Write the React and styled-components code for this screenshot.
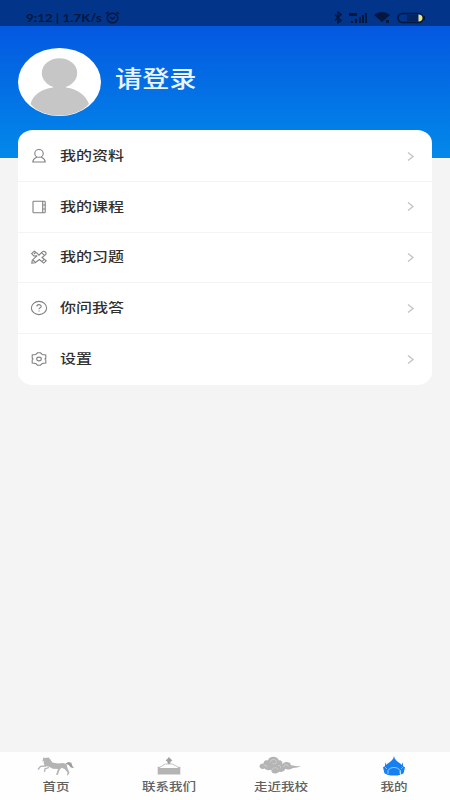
import React from "react";
import styled, { createGlobalStyle } from "styled-components";

const GlobalStyle = createGlobalStyle`
  * {
    box-sizing: border-box;
  }

  body {
    margin: 0;
    background-color: #f4f4f4;
    font-family: "Liberation Sans", "Noto Sans CJK SC", sans-serif;
  }
`;

const Page = styled.div`
  display: flex;
  flex-direction: column;
  width: 450px;
  height: 800px;
  overflow: hidden;
  background-color: #f4f4f4;
`;

const StatusBar = styled.div`
  display: flex;
  flex: none;
  justify-content: space-between;
  align-items: center;
  height: 26px;
  padding: 9px 25px 0 26px;
  background-color: #023489;
  color: #03173f;
`;

const StatusGroup = styled.div`
  display: flex;
  align-items: center;
  gap: ${(props) => props.$gap}px;
`;

const StatusText = styled.span`
  width: 76px;
  font-family: Lato, sans-serif;
  font-size: 12px;
  font-weight: 700;
  line-height: 14px;
  white-space: nowrap;
  transform: scaleX(1.11);
  transform-origin: left center;
`;

const Header = styled.header`
  display: flex;
  flex: none;
  gap: 14px;
  height: 133px;
  padding: 22px 18px 0;
  border-bottom: 1px solid #fdfeff;
  background: linear-gradient(#0458e0, #0289ea);
`;

const Avatar = styled.svg`
  display: block;
  width: 83px;
  height: 68px;
`;

const LoginText = styled.h1`
  margin: 14px 0 0;
  color: #eaf5ff;
  font-size: 23px;
  font-weight: 500;
  line-height: 34px;
  transform: scaleX(1.18);
  transform-origin: left center;
`;

const Menu = styled.main`
  flex: none;
  width: 414px;
  height: 255px;
  margin: -29px 18px 0;
  padding-top: 1.2px;
  border-radius: 15px / 13px;
  background-color: #fff;
`;

const MenuRow = styled.div`
  display: flex;
  align-items: center;
  height: 50.7px;
  padding: 0 17px 0 12px;
  border-bottom: 1px solid #f4f4f4;

  &:last-child {
    border-bottom: none;
  }
`;

const LineIcon = styled.svg`
  flex: none;
  width: 18px;
  height: 16px;
  margin-right: 12px;
  fill: none;
  stroke: #808080;
  stroke-width: 1.1;
`;

const MenuLabel = styled.span`
  flex: 1;
  color: #303030;
  font-size: 13px;
  font-weight: 500;
  line-height: 20px;
  transform: scaleX(1.23);
  transform-origin: left center;
`;

const Chevron = styled.svg`
  width: 9px;
  height: 11px;
  fill: none;
  stroke: #c4c4c4;
  stroke-width: 1.4;
`;

const TabBar = styled.nav`
  display: flex;
  flex: none;
  height: 48px;
  margin-top: auto;
  background-color: #fefefe;
`;

const Tab = styled.div`
  display: flex;
  flex: 1;
  flex-direction: column;
  align-items: center;
  padding-top: 4px;
  color: ${(props) => (props.$active ? "#1680f2" : "#b4b4b4")};
`;

const TabIcon = styled.svg`
  width: 44px;
  height: 22px;
`;

const TabLabel = styled.span`
  margin-top: 1px;
  color: #606060;
  font-size: 11px;
  font-weight: 500;
  line-height: 16px;
  transform: scaleX(1.23);
`;

const menuItems = [
  {
    label: "我的资料",
    icon: (
      <>
        <ellipse cx="9" cy="5.4" rx="4.2" ry="3.9" />
        <path d="M7 8.8C6 10 3 9.8 2.8 14H15.2C15 9.8 12 10 11 8.8" />
      </>
    ),
  },
  {
    label: "我的课程",
    icon: (
      <>
        <rect x="3" y="2.3" width="12.2" height="11.4" rx="0.8" />
        <path d="M12.7 2.3v11.4M12.7 6h2.5M12.7 10h2.5" />
      </>
    ),
  },
  {
    label: "我的习题",
    icon: (
      <>
        <path d="M7.2 6.7 3.9 7 1.7 4.6 4.3 2.2 7 4.1 9 6.2 12.3 2.9Q13.7 1.6 15.3 3T15.5 5.7L12 8.5 16.2 11.8 13.7 14.1 9.4 10.5 5.2 13.8 1.8 14.1 2.3 11.2 7.2 6.7" />
        <path d="m11.6 3.8 2.8 2.4M2.8 11l2.7 2.4M12 12.3l2.3-2M4 5l1.6-1.5" />
      </>
    ),
  },
  {
    label: "你问我答",
    icon: (
      <>
        <ellipse cx="9" cy="8" rx="7.6" ry="6.6" />
        <path d="M6.9 6.5C6.9 4 11.2 4.1 11.2 6.4 11.2 7.9 9 7.7 9 9.3M9 10.4v1.2" />
      </>
    ),
  },
  {
    label: "设置",
    icon: (
      <>
        <path d="M7.5 1.8h3L12.2 3.5 15.8 4v3.2L15 8l.8.8V12l-3.6.5-1.7 1.7h-3L5.8 12.5 2.2 12V8.8L3 8l-.8-.8V4l3.6-.5z" />
        <ellipse cx="9" cy="8" rx="2.3" ry="1.9" />
      </>
    ),
  },
];

const tabs = [
  {
    label: "首页",
    icon: (
      <>
        <path
          fill="currentColor"
          d="M8.3 5.5 9.5 1.3l1.2.8 4-.5 1.5 1.6 2.2 3.2 5.6 1.1 5-.5 3.6 1 .9 4.2 2 4.4-1.6 2.8-1-.5.7-2.4-3-3.6-3.1-1.1-2 2.1-1.6 4.8-1.9.4 2-6-5.3-.4-3.6-2-4.2-.7-1.3-3 .3-2.2-2 .9z"
        />
        <path
          fill="none"
          stroke="currentColor"
          strokeWidth="1.3"
          d="m12 10-5.5.3L4 13.5M15 11.5l-4 1.3-.5 3"
        />
        <path fill="#9c9c9c" d="M31.5 7.6 34.5 6l2.8.8 1 3 1.7 2.2-3.2-.6-2-2.5z" />
      </>
    ),
  },
  {
    label: "联系我们",
    icon: (
      <>
        <path fill="#a0a0a0" d="M22 1 23.7 3 25.4 4.3 23.6 5.7 23 8h-2l-.6-2.3-1.8-1.4L20.3 3z" />
        <path fill="none" stroke="currentColor" strokeWidth="0.8" d="M11.2 12 18.5 8h7l7.3 4" />
        <path fill="currentColor" d="m10.7 10.5 3.2 1.4h16.2l3.2-1.4V18.6H10.7z" />
      </>
    ),
  },
  {
    label: "走近我校",
    icon: (
      <>
        <path
          fill="currentColor"
          d="M.5 11c-.5-2.3 2-3.8 4.2-3.4C4.2 4 8.5 4.2 9 4.5 9.5-.2 18.8-.6 19.8 4.4c4-.5 4 3.3 3.1 4.3 2.8-4 9-3.3 9 .6 3 .4 6 1.1 10.6 1-5 1.6-7.4 1.3-10 2.4-3.3 1.5-5.3.7-6.2.1-.8 3-3.9 3.4-6 3-4.2 3.6-8.7 1.3-7.9-2C8.8 15 6 13.6 5.7 12.6 4 13.6 1.6 12.9.5 11z"
        />
        <path
          fill="none"
          stroke="#d4d4d4"
          strokeWidth="0.8"
          d="M11 6.4c1-4.4 7.3-3.2 6.5 0-.5 2.3-4.3 1.9-3.8.2M4.7 9.6c2-1.4 4.4.6 2.4 1.7M13 14c.2-3 6.7-3 5.5-.3M19 9.4c2.6 0 3.4 1.9 2.2 2.9M24.5 11c.5-3.1 5-2.9 4.6-.3"
        />
      </>
    ),
  },
  {
    label: "我的",
    active: true,
    icon: (
      <>
        <path
          fill="currentColor"
          d="M22 0c.5 3.2 2.4 5.2 6.2 7.6 2.4 1.7 3.3 3.7 2.4 6.4H13.4c-.9-2.700 0-4.700 2.400-6.400C19.600 5.200 21.500 3.200 22 0z"
        />
        <path
          fill="currentColor"
          d="M13.300 6.200 15 10.500l1 8.500-3.600-1.800L11 11.200l1.900-1zM30.700 6.200 29 10.500l-1 8.500 3.600-1.800L33 11.200l-1.900-1zM15 13h14v5.500l-3.500 1h-7l-3.500-1z"
        />
        <path
          fill="none"
          stroke="#a8d4ff"
          strokeWidth="0.9"
          d="M16 17.800v-3.300c2.200-4 9.800-4 12 0v3.300M13.200 11.300l1.600 1.500M30.800 11.300l-1.600 1.500"
        />
      </>
    ),
  },
];

const App = () => {
  return (
    <>
      <GlobalStyle />
      <Page>
        <StatusBar>
          <StatusGroup $gap={3}>
            <StatusText>9:12 | 1.7K/s</StatusText>
            <svg width="15" height="13" fill="none" stroke="currentColor" strokeWidth="1.5">
              <ellipse cx="7.5" cy="7" rx="5.3" ry="4.8" />
              <path d="M.8 3 3.5 1M14.2 3 11.5 1M5 6l2.5 2L10 6" />
            </svg>
          </StatusGroup>
          <StatusGroup $gap={6}>
            <svg width="9" height="13" fill="none" stroke="currentColor" strokeWidth="1.4">
              <path d="m1 3.5 6 6-3 2.5V1l3 2.5-6 6" />
            </svg>
            <svg width="18" height="12" fill="currentColor">
              <path d="M0 1h8v3H0zM2 9h2v2H2zM6 7h2v4H6zM10 5h2v6h-2zM13 3h2v8h-2zM16 1h2v10h-2z" />
            </svg>
            <svg width="18" height="13" fill="currentColor">
              <path d="M1 4Q9-2 17 4L9 11zM13 9h3v3h-3z" />
            </svg>
            <svg width="28" height="12" fill="none">
              <rect x="1" y="1.5" width="25" height="9" rx="4.5" stroke="currentColor" strokeWidth="1.5" />
              <path fill="currentColor" d="M10 3h11v6H10z" opacity="0.55" />
              <path fill="#eee37a" d="M21.5 2.5c2.6 0 4 1.4 4 3.5s-1.4 3.5-4 3.5z" />
              <path stroke="currentColor" strokeWidth="2" d="M27 4v4" />
            </svg>
          </StatusGroup>
        </StatusBar>
        <Header>
          <Avatar viewBox="0 0 83 68">
            <defs>
              <clipPath id="avatar-clip">
                <ellipse cx="41.5" cy="34" rx="41" ry="33.5" />
              </clipPath>
            </defs>
            <ellipse cx="41.5" cy="34" rx="41.5" ry="34" fill="#fff" />
            <g clipPath="url(#avatar-clip)" fill="#c6c6c6">
              <ellipse cx="41.5" cy="25" rx="17.7" ry="14.7" />
              <path d="M35 37h13v2.5c12 1.5 20 8 23 16.5-7 8-18 12-29.5 12S19 64 12.5 56C15 47 23 41 35 39.5z" />
            </g>
          </Avatar>
          <LoginText>请登录</LoginText>
        </Header>
        <Menu>
          {menuItems.map((item) => (
            <MenuRow key={item.label}>
              <LineIcon viewBox="0 0 18 16">{item.icon}</LineIcon>
              <MenuLabel>{item.label}</MenuLabel>
              <Chevron viewBox="0 0 9 11">
                <path d="m2 1.5 5 4-5 4" />
              </Chevron>
            </MenuRow>
          ))}
        </Menu>
        <TabBar>
          {tabs.map((tab) => (
            <Tab key={tab.label} $active={tab.active}>
              <TabIcon viewBox="0 0 44 22">{tab.icon}</TabIcon>
              <TabLabel>{tab.label}</TabLabel>
            </Tab>
          ))}
        </TabBar>
      </Page>
    </>
  );
};

export default App;
